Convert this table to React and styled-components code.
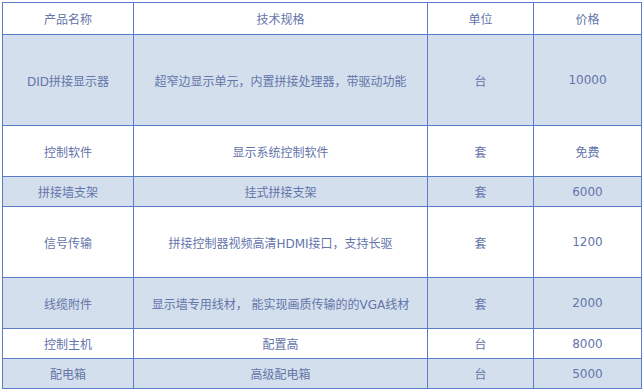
import React from "react"
import styled, { createGlobalStyle } from "styled-components"

const GlobalStyle = createGlobalStyle`
  body {
    margin: 0;
    background: #fff;
  }
`

const Wrap = styled.div`
  padding: 2px;
`

const Table = styled.div`
  display: grid;
  width: 640px;
  box-sizing: border-box;
  grid-template-columns: 130px 293px 105px 107px;
  grid-template-rows: 31px 90px 50px 29px 70px 50px 29px 29px;
  gap: 1px;
  padding: 1px;
  background: #5b7cc6;
  font-family: "DejaVu Sans", "Noto Sans CJK SC", sans-serif;
  font-size: 12px;
  color: #6475aa;
`

const Cell = styled.div`
  display: flex;
  align-items: center;
  justify-content: center;
  text-align: center;
  background: ${p => (p.$shaded ? "#d3dfec" : "#fff")};
  white-space: nowrap;
`

const head = ["产品名称", "技术规格", "单位", "价格"]

const rows = [
  ["DID拼接显示器", "超窄边显示单元，内置拼接处理器，带驱动功能", "台", "10000"],
  ["控制软件", "显示系统控制软件", "套", "免费"],
  ["拼接墙支架", "挂式拼接支架", "套", "6000"],
  ["信号传输", "拼接控制器视频高清HDMI接口，支持长驱", "套", "1200"],
  ["线缆附件", "显示墙专用线材， 能实现画质传输的的VGA线材", "套", "2000"],
  ["控制主机", "配置高", "台", "8000"],
  ["配电箱", "高级配电箱", "台", "5000"],
]

export default function App() {
  return (
    <Wrap>
      <GlobalStyle />
      <Table>
        {head.map(h => (
          <Cell key={h}>{h}</Cell>
        ))}
        {rows.map((r, i) =>
          r.map((c, j) => (
            <Cell key={i + "-" + j} $shaded={i % 2 === 0}>{c}</Cell>
          ))
        )}
      </Table>
    </Wrap>
  )
}
